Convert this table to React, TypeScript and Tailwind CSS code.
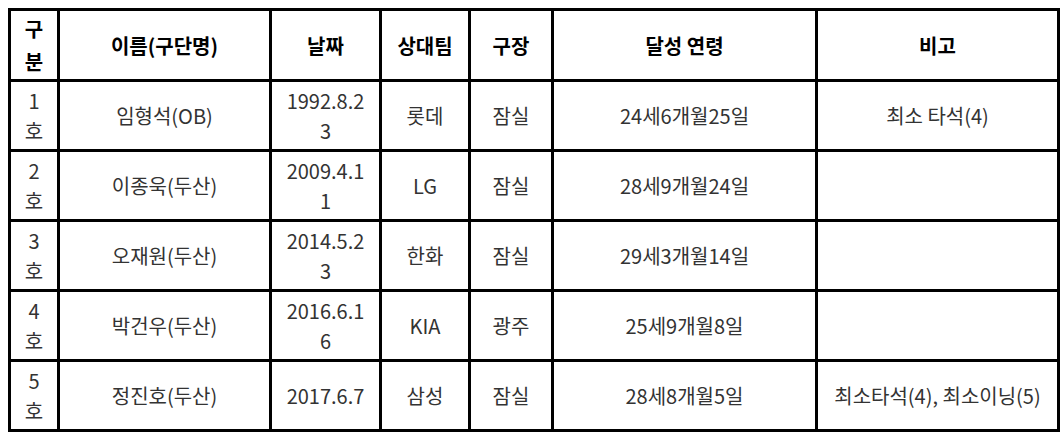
const rows = [
  { no: "1호", name: "임형석(OB)", date: "1992.8.23", team: "롯데", park: "잠실", age: "24세6개월25일", note: "최소 타석(4)" },
  { no: "2호", name: "이종욱(두산)", date: "2009.4.11", team: "LG", park: "잠실", age: "28세9개월24일", note: "" },
  { no: "3호", name: "오재원(두산)", date: "2014.5.23", team: "한화", park: "잠실", age: "29세3개월14일", note: "" },
  { no: "4호", name: "박건우(두산)", date: "2016.6.16", team: "KIA", park: "광주", age: "25세9개월8일", note: "" },
  { no: "5호", name: "정진호(두산)", date: "2017.6.7", team: "삼성", park: "잠실", age: "28세8개월5일", note: "최소타석(4), 최소이닝(5)" },
];

export default function App() {
  return (
    <div className="bg-white w-[1063px] h-[438px] pt-[8px] pl-[8px] font-['Noto_Sans_CJK_KR','Noto_Sans',sans-serif]">
      <table className="table-fixed border-collapse w-[1049px] text-[20px]">
        <colgroup>
          <col className="w-[49px]" />
          <col className="w-[212px]" />
          <col className="w-[110px]" />
          <col className="w-[89px]" />
          <col className="w-[83px]" />
          <col className="w-[264px]" />
          <col className="w-[242px]" />
        </colgroup>
        <thead>
          <tr className="h-[71px] font-bold text-black leading-[33px]">
            <th className="border-[3px] border-black px-[9px] break-all">구분</th>
            <th className="border-[3px] border-black">이름(구단명)</th>
            <th className="border-[3px] border-black">날짜</th>
            <th className="border-[3px] border-black">상대팀</th>
            <th className="border-[3px] border-black">구장</th>
            <th className="border-[3px] border-black">달성 연령</th>
            <th className="border-[3px] border-black">비고</th>
          </tr>
        </thead>
        <tbody>
          {rows.map((r) => (
            <tr key={r.no} className="h-[70px] text-[#333] leading-[30px] text-center">
              <td className="border-[3px] border-black px-[9px] break-all">{r.no}</td>
              <td className="border-[3px] border-black">{r.name}</td>
              <td className="border-[3px] border-black px-[13px] break-all">{r.date}</td>
              <td className="border-[3px] border-black">{r.team}</td>
              <td className="border-[3px] border-black">{r.park}</td>
              <td className="border-[3px] border-black">{r.age}</td>
              <td className="border-[3px] border-black">{r.note}</td>
            </tr>
          ))}
        </tbody>
      </table>
    </div>
  );
}
